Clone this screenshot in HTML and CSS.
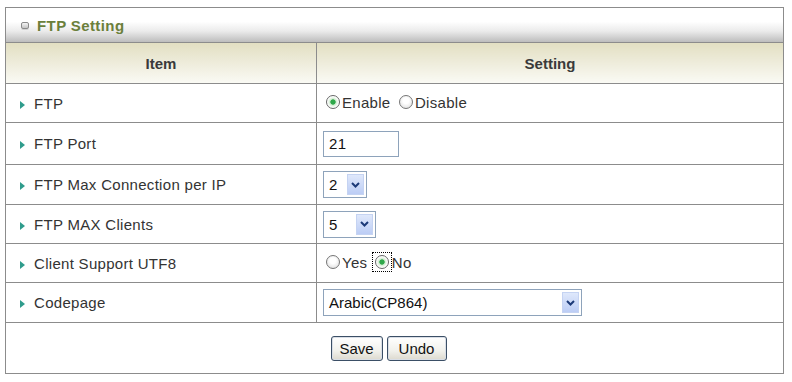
FILE: index.html
```html
<!DOCTYPE html>
<html>
<head>
<meta charset="utf-8">
<link rel="stylesheet" href="styles.css">
</head>
<body>
<div class="panel">
  <div class="title">
    <span class="title-icon"></span>
    <span class="title-text">FTP Setting</span>
  </div>
  <table class="grid">
    <thead>
      <tr class="head">
        <th class="col-item">Item</th>
        <th class="col-setting">Setting</th>
      </tr>
    </thead>
    <tbody>
      <tr class="r1">
        <td class="label"><span class="arrow"></span>FTP</td>
        <td class="value">
          <label class="radio-opt"><input type="radio" name="ftp" class="radio" checked>Enable</label>
          <label class="radio-opt"><input type="radio" name="ftp" class="radio">Disable</label>
        </td>
      </tr>
      <tr class="r2">
        <td class="label"><span class="arrow"></span>FTP Port</td>
        <td class="value"><div class="textbox">21</div></td>
      </tr>
      <tr class="r3">
        <td class="label"><span class="arrow"></span>FTP Max Connection per IP</td>
        <td class="value"><div class="select sel-2"><span class="sel-text">2</span><span class="sel-btn"><svg width="9" height="6" viewBox="0 0 9 6"><path d="M1 1 L4.5 4.5 L8 1" fill="none" stroke="#1c3a78" stroke-width="2"/></svg></span></div></td>
      </tr>
      <tr class="r4">
        <td class="label"><span class="arrow"></span>FTP MAX Clients</td>
        <td class="value"><div class="select sel-5"><span class="sel-text">5</span><span class="sel-btn"><svg width="9" height="6" viewBox="0 0 9 6"><path d="M1 1 L4.5 4.5 L8 1" fill="none" stroke="#1c3a78" stroke-width="2"/></svg></span></div></td>
      </tr>
      <tr class="r5">
        <td class="label"><span class="arrow"></span>Client Support UTF8</td>
        <td class="value">
          <label class="radio-opt"><input type="radio" name="utf" class="radio">Yes</label>
          <label class="radio-opt"><span class="focus"><input type="radio" name="utf" class="radio" checked></span>No</label>
        </td>
      </tr>
      <tr class="r6">
        <td class="label"><span class="arrow"></span>Codepage</td>
        <td class="value"><div class="select sel-cp"><span class="sel-text">Arabic(CP864)</span><span class="sel-btn"><svg width="9" height="6" viewBox="0 0 9 6"><path d="M1 1 L4.5 4.5 L8 1" fill="none" stroke="#1c3a78" stroke-width="2"/></svg></span></div></td>
      </tr>
      <tr class="actions">
        <td colspan="2">
          <div class="btns">
            <button class="btn btn-save">Save</button>
            <button class="btn btn-undo">Undo</button>
          </div>
        </td>
      </tr>
    </tbody>
  </table>
</div>
</body>
</html>
```

FILE: styles.css
```css
html, body {
  margin: 0;
  padding: 0;
  background: #ffffff;
}
body {
  padding: 7px 8px 0 5px;
  font-family: "Liberation Sans", Arial, sans-serif;
  color: #333333;
}
.panel {
  width: 779px;
  border: 1px solid #8c8c8c;
  box-sizing: border-box;
}
.title {
  height: 34px;
  display: flex;
  align-items: center;
  padding-left: 15px;
  background: linear-gradient(to bottom, #ffffff 0%, #ffffff 40%, #ebebeb 68%, #bdbdbd 100%);
  border-bottom: 1px solid #8c8c8c;
}
.title-icon {
  width: 6px;
  height: 5px;
  border: 1px solid #8a8a8a;
  border-radius: 2px;
  background: linear-gradient(to bottom, #f4f4f4, #c4c4c4);
  box-shadow: 0 1px 0 #d0d0d0;
  margin-right: 8px;
  margin-top: 1px;
}
.title-text {
  font-weight: bold;
  font-size: 15px;
  color: #6b7f3b;
  letter-spacing: 0.4px;
}
.grid {
  width: 100%;
  border-collapse: collapse;
  table-layout: fixed;
}
.grid th, .grid td {
  border: 1px solid #8c8c8c;
  padding: 0;
}
.grid tr:first-child th { border-top: none; }
.grid tr th:first-child, .grid tr td:first-child { border-left: none; }
.grid tr th:last-child, .grid tr td:last-child { border-right: none; }
.grid tr.actions td { border-bottom: none; }
.col-item { width: 310px; }
.head th {
  height: 40px;
  font-size: 15px;
  font-weight: bold;
  color: #3a3a3a;
  background: linear-gradient(to bottom, #e2dfc2 0%, #eeecdb 50%, #fafaf4 100%);
}
.label {
  font-size: 15px;
  letter-spacing: 0.3px;
  color: #333333;
  padding-left: 14px !important;
}
.arrow {
  display: inline-block;
  width: 0;
  height: 0;
  border-top: 4px solid transparent;
  border-bottom: 4px solid transparent;
  border-left: 5px solid #2f9c8c;
  margin-right: 9px;
  vertical-align: 0px;
}
.r1 td { height: 38px; }
.r2 td { height: 41px; }
.r3 td { height: 39px; }
.r4 td { height: 38px; }
.r5 td { height: 38px; }
.r6 td { height: 39px; }
.value {
  padding-left: 6px !important;
  font-size: 15px;
  letter-spacing: 0.3px;
}
.radio-opt {
  display: inline-flex;
  align-items: center;
  margin-right: 1px;
}
.radio {
  appearance: none;
  -webkit-appearance: none;
  width: 14px;
  height: 14px;
  margin: 0 2px 0 3px;
  border: 1px solid #767676;
  border-radius: 50%;
  background: radial-gradient(circle at 50% 40%, #ffffff 30%, #d8d8d8 100%);
  box-sizing: border-box;
}
.radio:checked {
  background: radial-gradient(circle, #2fa84a 0, #2fa84a 2.3px, #cfeccf 3px, #ffffff 5.5px);
  border-color: #666666;
}
.focus {
  display: inline-flex;
  outline: 1px dotted #000000;
  outline-offset: 2px;
  margin: 0 3px 0 2px;
}
.focus .radio { margin: 0; }
.textbox {
  width: 76px;
  height: 26px;
  border: 1px solid #8ea3bb;
  box-sizing: border-box;
  padding-left: 5px;
  display: flex;
  align-items: center;
  font-size: 15px;
  color: #111111;
  background: #ffffff;
}
.select {
  height: 27px;
  border: 1px solid #8ea3bb;
  box-sizing: border-box;
  display: flex;
  align-items: center;
  background: #ffffff;
  color: #111111;
  padding: 2px;
}
.sel-text {
  flex: 1;
  padding-left: 3px;
  font-size: 15px;
  letter-spacing: 0;
}
.sel-btn {
  width: 17px;
  height: 21px;
  display: flex;
  align-items: center;
  justify-content: center;
  background: linear-gradient(to bottom, #dfe8fb, #bccdf5);
  border: 1px solid #c5d3f2;
  box-sizing: border-box;
}
.sel-2 { width: 44px; }
.sel-5 { width: 53px; }
.sel-cp { width: 259px; }
.actions td {
  height: 50px;
}
.btns {
  display: flex;
  justify-content: center;
  gap: 4px;
  padding-right: 12px;
}
.btn {
  font-family: "Liberation Sans", Arial, sans-serif;
  font-size: 15px;
  color: #111111;
  height: 25px;
  padding: 0;
  border: 1px solid #3b4f66;
  border-radius: 3px;
  background: linear-gradient(to bottom, #ffffff 0%, #f1f1ec 60%, #dcd9ce 100%);
  box-shadow: inset 0 0 0 1px #d9dee6;
}
.btn-save { width: 52px; }
.btn-undo { width: 60px; }
```
